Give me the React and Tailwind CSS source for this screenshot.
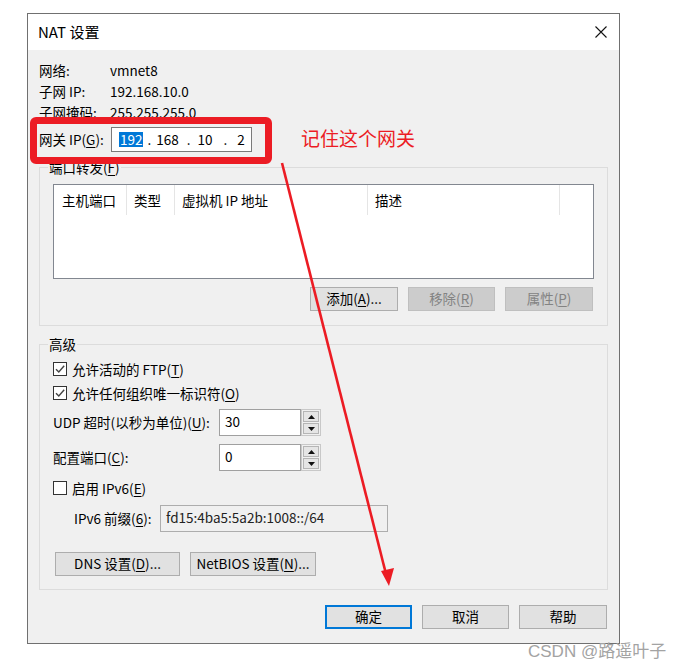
import React from 'react';

function Key({ children }) {
  return <span className="underline underline-offset-2">{children}</span>;
}

function Btn({ children, disabled, primary, w = 'w-[87px]' }) {
  let tone = 'bg-[#e1e1e1] border border-[#adadad] text-black';
  if (disabled) tone = 'bg-[#cccccc] border border-[#bfbfbf] text-[#838383]';
  if (primary) tone = 'bg-[#e1e1e1] border-2 border-[#0078d7] text-black';
  return (
    <div className={`${w} h-[24px] flex items-center justify-center ${tone}`}>
      <span className="leading-none">{children}</span>
    </div>
  );
}

function Check({ on }) {
  return (
    <div className="w-[14px] h-[14px] border border-[#333333] bg-white flex items-center justify-center">
      {on && (
        <svg width="12" height="12" viewBox="0 0 12 12">
          <path d="M2 6.2 L4.8 9 L10.2 2.8" fill="none" stroke="#444" strokeWidth="1.4" />
        </svg>
      )}
    </div>
  );
}

function Spin({ value }) {
  return (
    <div className="flex h-[27px]">
      <div className="w-[82px] h-full bg-white border border-[#a0a0a0] flex items-center pl-[5px] pb-[2px]">{value}</div>
      <div className="w-[20px] h-full border border-[#c8c8c8] flex flex-col gap-[1px] p-[1px]">
        <div className="flex-1 bg-[#e5e5e5] border border-[#b5b5b5] flex items-center justify-center">
          <svg width="7" height="4" viewBox="0 0 7 4"><path d="M0 4 L3.5 0 L7 4 Z" fill="#111" /></svg>
        </div>
        <div className="flex-1 bg-[#e5e5e5] border border-[#b5b5b5] flex items-center justify-center">
          <svg width="7" height="4" viewBox="0 0 7 4"><path d="M0 0 L3.5 4 L7 0 Z" fill="#111" /></svg>
        </div>
      </div>
    </div>
  );
}

export default function App() {
  return (
    <div className="relative w-[680px] h-[671px] bg-white overflow-hidden font-['Noto_Sans_CJK_SC',sans-serif] text-[13.5px] text-black">
      <div className="pt-[13px] pl-[27px]">
        <div className="w-[593px] h-[631px] border border-[#707070] bg-[#f0f0f0] flex flex-col">
          {/* title bar */}
          <div className="h-[36px] bg-white flex items-center justify-between pl-[10px] pr-[12px]">
            <span className="text-[15px]">NAT 设置</span>
            <svg width="12" height="12" viewBox="0 0 12 12">
              <path d="M0.5 0.5 L11.5 11.5 M11.5 0.5 L0.5 11.5" stroke="#111" strokeWidth="1.1" />
            </svg>
          </div>

          <div className="flex-1 px-[11px] flex flex-col">
            {/* info */}
            <div className="pt-[10px]">
              <div className="flex h-[21px] items-center">
                <span className="w-[71px]">网络:</span>
                <span>vmnet8</span>
              </div>
              <div className="flex h-[21px] items-center">
                <span className="w-[71px]">子网 IP:</span>
                <span>192.168.10.0</span>
              </div>
              <div className="flex h-[21px] items-center">
                <span className="w-[71px]">子网掩码:</span>
                <span>255.255.255.0</span>
              </div>
              <div className="flex h-[25px] items-center mt-[4px]">
                <span className="w-[72px]">网关 IP(<Key>G</Key>):</span>
                <div className="w-[141px] h-[25px] bg-white border border-[#7a7a7a] flex items-center pl-[7px] pb-[1px]">
                  <span className="bg-[#0078d7] text-white px-[1px] leading-[15px]">192</span>
                  <span className="ml-[4px]">.</span>
                  <span className="ml-[5px]">168</span>
                  <span className="ml-[8px]">.</span>
                  <span className="ml-[7px]">10</span>
                  <span className="ml-[11px]">.</span>
                  <span className="ml-[10px]">2</span>
                </div>
              </div>
            </div>

            {/* port forwarding */}
            <div className="relative mt-[15px] h-[159px] border border-[#dcdcdc] px-[13px] pt-[16px]">
              <span className="absolute -top-[10px] left-[8px] px-[1px] bg-[#f0f0f0] leading-[18px]">端口转发(<Key>F</Key>)</span>
              <div className="h-[95px] bg-white border border-[#828790]">
                <div className="flex h-[30px]">
                  <div className="w-[73px] border-r border-[#e5e5e5] flex items-center pl-[8px]">主机端口</div>
                  <div className="w-[48px] border-r border-[#e5e5e5] flex items-center pl-[7px]">类型</div>
                  <div className="w-[193px] border-r border-[#e5e5e5] flex items-center pl-[7px]">虚拟机 IP 地址</div>
                  <div className="w-[192px] border-r border-[#e5e5e5] flex items-center pl-[7px]">描述</div>
                </div>
              </div>
              <div className="flex justify-end gap-[10px] mt-[8px] pr-[1px]">
                <Btn w="w-[88px]">添加(<Key>A</Key>)...</Btn>
                <Btn w="w-[87px]" disabled>移除(<Key>R</Key>)</Btn>
                <Btn w="w-[88px]" disabled>属性(<Key>P</Key>)</Btn>
              </div>
            </div>

            {/* advanced */}
            <div className="relative mt-[18px] h-[246px] border border-[#dcdcdc] px-[13px] pt-[12px]">
              <span className="absolute -top-[10px] left-[8px] px-[1px] bg-[#f0f0f0] leading-[18px]">高级</span>
              <div className="flex h-[24px] items-center gap-[5px]">
                <Check on />
                <span>允许活动的 FTP(<Key>T</Key>)</span>
              </div>
              <div className="flex h-[24px] items-center gap-[5px]">
                <Check on />
                <span>允许任何组织唯一标识符(<Key>O</Key>)</span>
              </div>
              <div className="flex h-[27px] items-center mt-[4px]">
                <span className="w-[166px]">UDP 超时(以秒为单位)(<Key>U</Key>):</span>
                <Spin value="30" />
              </div>
              <div className="flex h-[27px] items-center mt-[8px]">
                <span className="w-[166px]">配置端口(<Key>C</Key>):</span>
                <Spin value="0" />
              </div>
              <div className="flex h-[24px] items-center gap-[5px] mt-[5px]">
                <Check />
                <span>启用 IPv6(<Key>E</Key>)</span>
              </div>
              <div className="flex h-[27px] items-center mt-[5px] pl-[21px]">
                <span className="w-[86px]">IPv6 前缀(<Key>6</Key>):</span>
                <div className="w-[228px] h-[27px] bg-[#f0f0f0] border border-[#adadad] flex items-center pl-[5px] pb-[3px] text-[#222]">
                  fd15:4ba5:5a2b:1008::/64
                </div>
              </div>
              <div className="flex gap-[10px] mt-[20px] ml-[2px]">
                <Btn w="w-[125px]">DNS 设置(<Key>D</Key>)...</Btn>
                <Btn w="w-[126px]">NetBIOS 设置(<Key>N</Key>)...</Btn>
              </div>
            </div>

            {/* dialog buttons */}
            <div className="flex justify-end gap-[10px] mt-[15px] pr-[1px]">
              <Btn primary>确定</Btn>
              <Btn>取消</Btn>
              <Btn w="w-[88px]">帮助</Btn>
            </div>
          </div>
        </div>
      </div>

      {/* annotation */}
      <div className="absolute left-[30px] top-[117px] w-[242px] h-[47px] border-[7px] border-[#ec1c24] rounded-[6px]" />
      <div className="absolute left-[301px] top-[126px] text-[19px] leading-[24px] text-[#ec1c24]">记住这个网关</div>
      <svg className="absolute left-0 top-0 pointer-events-none" width="680" height="671" viewBox="0 0 680 671">
        <line x1="282" y1="163" x2="386" y2="574" stroke="#ec1c24" strokeWidth="2.6" />
        <path d="M381 571 L394 568 L389 586 Z" fill="#ec1c24" />
      </svg>
      <div className="absolute left-[528px] top-[641px] text-[17px] leading-[22px] text-[#a3a3a3] font-['Liberation_Sans','Noto_Sans_CJK_SC',sans-serif]">
        CSDN @路遥叶子
      </div>
    </div>
  );
}
